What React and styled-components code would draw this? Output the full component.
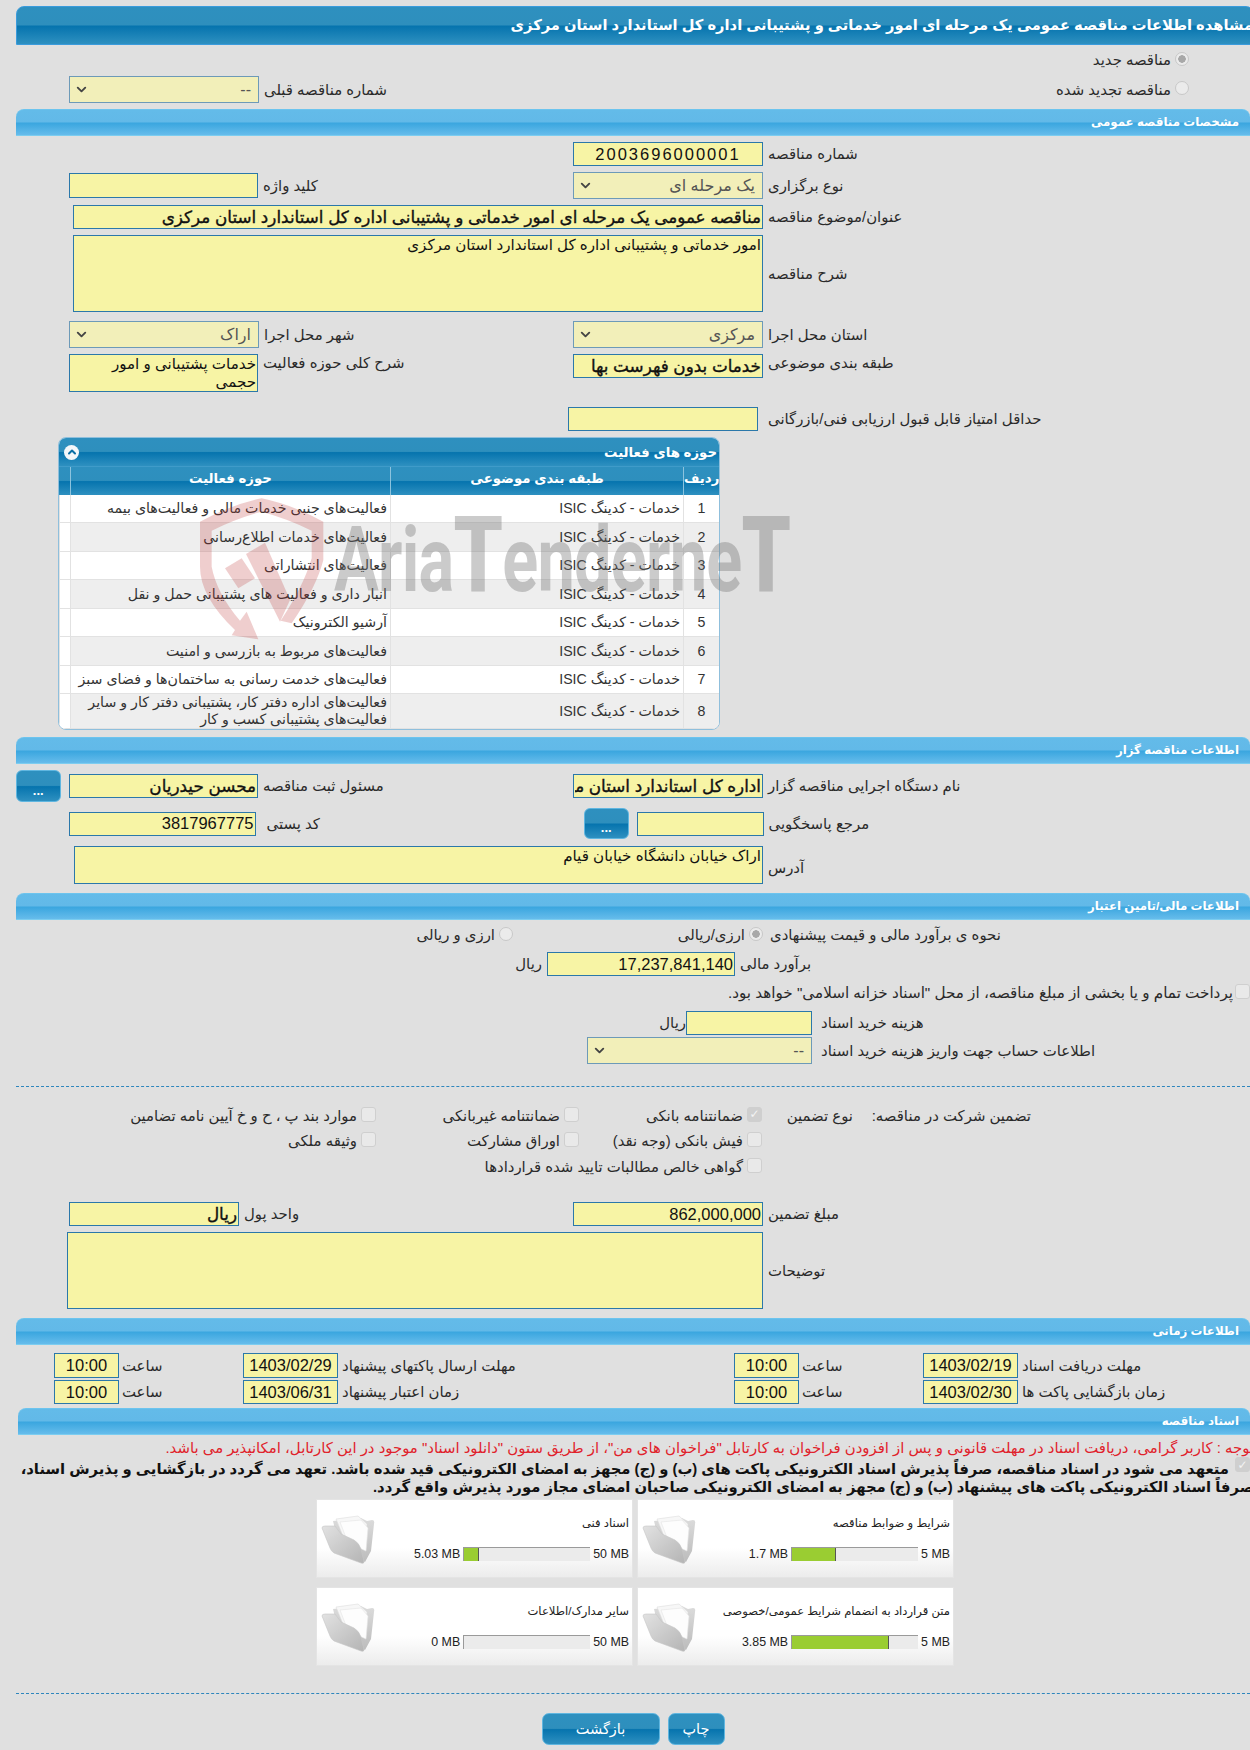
import React from "react"
import styled, { createGlobalStyle, css } from "styled-components"
import { ChevronDown, ChevronUp } from "lucide-react"

const GlobalStyle = createGlobalStyle`
  html, body {
    margin: 0;
    padding: 0;
    background: #e0e0e0;
    overflow-x: hidden;
  }
  body, input, textarea, button {
    font-family: "Liberation Sans", "DejaVu Sans", sans-serif;
  }
`

const darkGloss = css`
  background: linear-gradient(#2e90bf 0%, #2e8fbd 48%, #0674ae 52%, #2e90c0 100%);
`

const lightGloss = css`
  background: linear-gradient(#63bbe9 0%, #62b9e8 48%, #3aa6df 52%, #66bceb 100%);
`

const Page = styled.div`
  position: relative;
  width: 1250px;
  height: 1750px;
  box-sizing: border-box;
  padding: 6px 0 0 16px;
  overflow: hidden;
  color: #2a2a2a;
`

const TitleBar = styled.h1`
  ${darkGloss};
  height: 39px;
  box-sizing: border-box;
  margin: 0 -4px 0 0;
  padding: 0;
  border: 1px solid #3a9bdc;
  border-radius: 8px 8px 0 0;
  color: #fff;
  font-size: 14.7px;
  font-weight: 700;
  line-height: 36px;
  white-space: nowrap;
  overflow: hidden;
  text-align: right;
`

const SectionBar = styled.h2`
  ${lightGloss};
  height: 27px;
  box-sizing: border-box;
  margin: ${(p) => p.$mt || 0}px 0 0 ${(p) => p.$ml || 0}px;
  padding-right: 11px;
  border-bottom: 1px solid #7ccdf0;
  border-top: 1px solid #6cc4ee;
  border-radius: 8px 8px 0 0;
  color: #fff;
  font-size: 11.8px;
  font-weight: 700;
  line-height: 25px;
  text-align: right;
`

const Row = styled.div`
  display: grid;
  grid-template-columns: ${(p) => p.$split || 557}px 1fr;
  margin-top: ${(p) => p.$mt || 0}px;
  align-items: ${(p) => p.$align || "center"};
  min-height: ${(p) => p.$h || 0}px;
`

const Cell = styled.div`
  display: flex;
  align-items: ${(p) => p.$align || "center"};
  justify-content: ${(p) => p.$justify || "flex-start"};
  gap: ${(p) => p.$gap ?? 5}px;
  padding-left: ${(p) => p.$pl || 0}px;
  padding-right: ${(p) => p.$pr || 0}px;
  margin-left: ${(p) => p.$ml || 0}px;
`

const Wide = styled(Cell)`
  margin-top: ${(p) => p.$mt || 0}px;
`

const Label = styled.span.attrs({ dir: "rtl" })`
  font-size: 14.9px;
  line-height: 18px;
  white-space: nowrap;
  margin-top: ${(p) => p.$mt || 0}px;
`

const fieldBox = css`
  box-sizing: border-box;
  width: ${(p) => p.$w}px;
  height: ${(p) => p.$h || 24}px;
  flex: none;
  margin: 0;
  padding: 0 1px;
  border: 1px solid #2b78aa;
  border-radius: 0;
  background: #f7f4a5;
  color: #111;
  text-align: ${(p) => (p.$center ? "center" : "right")};
  outline: none;
`

const Input = styled.input.attrs((p) => ({
  dir: "rtl",
  readOnly: true,
  type: "text",
  value: p.value || "",
}))`
  ${fieldBox};
  font-size: ${(p) => (p.$num ? 16.5 : p.$strong ? 16.8 : 14.5)}px;
  letter-spacing: ${(p) => p.$spacing || 0}px;
  -webkit-text-stroke: ${(p) => (p.$strong ? "0.35px #111" : "0")};
`

const TextArea = styled.textarea.attrs((p) => ({
  dir: "rtl",
  readOnly: true,
  value: p.value || "",
}))`
  ${fieldBox};
  font-size: 15.1px;
  line-height: 18px;
  resize: none;
  overflow: hidden;
`

const SelectBox = styled.div`
  box-sizing: border-box;
  width: ${(p) => p.$w}px;
  height: 27px;
  flex: none;
  display: flex;
  align-items: center;
  justify-content: space-between;
  padding: 0 7px 0 4px;
  border: 1px solid #6d9ab8;
  background: #f2efb9;
  color: #555;
  font-size: 16px;

  svg {
    color: #444;
  }
`

const Select = ({ w, children }) => (
  <SelectBox $w={w}>
    <ChevronDown size={15} strokeWidth={3} />
    <span dir="rtl">{children}</span>
  </SelectBox>
)

const DotsButton = styled.button`
  ${darkGloss};
  width: 44.5px;
  height: ${(p) => p.$h || 32}px;
  flex: none;
  padding: 8px 0 0;
  margin-right: ${(p) => p.$mr || 0}px;
  border: 1px solid #5fb6e0;
  border-radius: 6px;
  color: #fff;
  font-size: 13px;
  font-weight: 700;
`

const Option = styled.label`
  display: flex;
  direction: rtl;
  align-items: center;
  gap: ${(p) => p.$gap ?? 4}px;
  width: ${(p) => (p.$w ? `${p.$w}px` : "auto")};
  padding-right: ${(p) => p.$pr || 0}px;
  font-size: ${(p) => p.$size || 14.9}px;
  line-height: 18px;
  white-space: nowrap;
`

const Radio = styled.input.attrs({ type: "radio", disabled: true })`
  appearance: none;
  box-sizing: border-box;
  flex: none;
  width: 14px;
  height: 14px;
  margin: -3px 0 0;
  border: 1px solid #c8c8c8;
  border-radius: 50%;
  background: #ebebeb;

  &:checked {
    background: radial-gradient(circle, #a8a8a8 0 3.5px, #ebebeb 4px);
  }
`

const Check = styled.input.attrs({ type: "checkbox", disabled: true })`
  appearance: none;
  box-sizing: border-box;
  flex: none;
  width: 15px;
  height: 15px;
  margin: -3px 0 0;
  border: 1px solid #cfcfcf;
  border-radius: 3px;
  background: #e9e9e9;
  display: grid;
  place-content: center;

  &:checked {
    background: #cfcfcf;
  }

  &:checked::after {
    content: "✓";
    color: #f4f4f4;
    font-size: 12px;
    font-weight: 700;
    line-height: 12px;
  }
`

const Panel = styled.section`
  width: 662px;
  height: 293px;
  box-sizing: border-box;
  margin: 6px 0 0 42px;
  border: 1px solid #8fbfdc;
  border-radius: 8px;
  background: #fff;
  overflow: hidden;
`

const PanelTitle = styled.div`
  ${darkGloss};
  height: 28px;
  display: flex;
  align-items: center;
  justify-content: space-between;
  padding: 0 2px 0 5px;
  color: #fff;
  font-size: 13.3px;
  font-weight: 700;
`

const Collapse = styled.span`
  width: 15px;
  height: 15px;
  display: grid;
  place-content: center;
  border-radius: 50%;
  background: #f3f7fa;
  color: #0b6fa6;
`

const tableColumns = "11px 320px 293px 36px"

const HeadRow = styled.div`
  ${darkGloss};
  height: 29px;
  display: grid;
  grid-template-columns: ${tableColumns};
  border-top: 1px solid #3f9bc9;
  box-sizing: border-box;
  color: #fff;
  font-size: 13.3px;
  font-weight: 700;
  line-height: 24px;
  text-align: center;
`

const HeadCell = styled.div`
  border-left: 1px solid #8cc3de;
  white-space: nowrap;
`

const BodyRow = styled.div`
  display: grid;
  grid-template-columns: ${tableColumns};
  height: ${(p) => p.$h}px;
`

const BodyCell = styled.div`
  box-sizing: border-box;
  display: flex;
  align-items: center;
  justify-content: ${(p) => (p.$center ? "center" : "flex-start")};
  direction: rtl;
  padding: 0 3px;
  background: ${(p) => (p.$alt ? "#eeeeee" : "#fff")};
  border-left: 1px solid #e2e2e2;
  border-bottom: 1px solid #e2e2e2;
  font-size: 14.2px;
  line-height: 17px;
  color: #333;
`

const Watermark = styled.div`
  position: absolute;
  left: 190px;
  top: 490px;
  width: 620px;
  height: 160px;
  pointer-events: none;
  display: flex;
  align-items: flex-end;
`

const WatermarkShield = styled.svg`
  flex: none;
`

const WatermarkText = styled.div`
  margin: 0 0 48px 4px;
  color: rgba(110, 110, 110, 0.36);
  font-family: Roboto, "Liberation Sans", sans-serif;
  font-size: 90px;
  font-weight: 700;
  line-height: 82px;
  letter-spacing: -1px;
  white-space: nowrap;
  transform: scaleX(0.74);
  transform-origin: left bottom;

  b {
    font-size: 106px;
    line-height: 82px;
  }
`

const Dashed = styled.hr`
  margin: ${(p) => p.$mt}px 0 0;
  border: 0;
  border-top: 1px dashed #2e86bd;
`

const GuaranteeGrid = styled.div`
  display: grid;
  direction: rtl;
  grid-template-columns: 178px 91px 183px 203px 1fr;
  grid-auto-rows: 25.5px;
  align-items: center;
  margin: 16px 219px 0 0;
`

const Plain = styled.span`
  font-size: 14.9px;
  white-space: nowrap;
`

const TimeRow = styled.div`
  display: grid;
  grid-template-columns: 189px 491px 189px 1fr;
  padding-left: 38px;
  margin-top: ${(p) => p.$mt}px;
`

const Notice = styled.p`
  margin: 4px -4px 0 0;
  direction: rtl;
  color: #e0222b;
  font-size: 14.9px;
  line-height: 18px;
  white-space: nowrap;
`

const Pledge = styled.div`
  direction: rtl;
  display: flex;
  align-items: flex-start;
  gap: 6px;
  margin: ${(p) => p.$mt || 0}px 0 0;
`

const PledgeLine = styled.p`
  margin: 0 ${(p) => p.$pull || 0}px 0 0;
  color: #111;
  font-size: 14.8px;
  font-weight: 700;
  line-height: 18px;
  white-space: nowrap;
`

const CardGrid = styled.div`
  display: grid;
  direction: rtl;
  grid-template-columns: 317px 317px;
  grid-auto-rows: 79px;
  gap: 9px 4px;
  width: 638px;
  margin: 3px 0 0 300px;
`

const Card = styled.div`
  box-sizing: border-box;
  display: grid;
  grid-template-columns: 1fr 60px;
  border: 1px solid #e4e4e4;
  background: linear-gradient(#fff 62%, #ececec 100%);
`

const CardBody = styled.div`
  padding: 15px 3px 0 0;
  color: #222;
`

const CardTitle = styled.div`
  font-size: 11.6px;
  line-height: 16px;
  white-space: nowrap;
`

const Meter = styled.div`
  display: flex;
  align-items: center;
  gap: 3px;
  margin-top: 16px;
`

const MeterText = styled.span.attrs({ dir: "ltr" })`
  font-size: 12.4px;
  line-height: 14px;
  white-space: nowrap;
`

const MeterTrack = styled.div`
  direction: ltr;
  box-sizing: border-box;
  width: 127px;
  height: 14px;
  border-top: 1px solid #9a9a9a;
  border-left: 1px solid #9a9a9a;
  background: #ebebeb;
`

const MeterFill = styled.div`
  height: 100%;
  box-sizing: border-box;
  border-right: 1px solid #555;
  background: #9acd32;
`

const FolderBox = styled.div`
  padding: 15px 0 0 2px;
`

const Actions = styled.div`
  display: flex;
  justify-content: center;
  gap: 8px;
  margin-top: 19px;
`

const ActionButton = styled.button`
  ${darkGloss};
  width: ${(p) => p.$w}px;
  height: 32px;
  padding: 0;
  border: 1px solid #5fb6e0;
  border-radius: 7px;
  color: #fff;
  font-size: 14.5px;
`

const FolderIcon = () => (
  <svg width="56" height="50" viewBox="0 0 56 50">
    <defs>
      <linearGradient id="folderFront" x1="0" y1="0" x2="1" y2="1">
        <stop offset="0" stopColor="#e2e2e2" />
        <stop offset="1" stopColor="#b4b4b4" />
      </linearGradient>
      <linearGradient id="folderBack" x1="0" y1="0" x2="0" y2="1">
        <stop offset="0" stopColor="#dcdcdc" />
        <stop offset="1" stopColor="#bcbcbc" />
      </linearGradient>
    </defs>
    <path d="M12 6 L40 3 L46 6 L51 5 Q54 5 53 9 L50 36 L44 47 L18 30 Z" fill="url(#folderBack)" />
    <path d="M15 4 L37 1 L46 9 L44 34 L24 26 Z" fill="#f7f7f7" stroke="#dedede" strokeWidth="0.6" />
    <path d="M19 7 L40 5 L47 13 L45 36 L27 28 Z" fill="#fdfdfd" stroke="#e4e4e4" strokeWidth="0.6" />
    <path d="M1 13 Q1 11 4 11 L14 11 L20 19 L33 25 Q38 28 40 34 L43 47 Q43 49 40 48 L13 38 Q10 36 9 33 Z" fill="url(#folderFront)" stroke="#c6c6c6" strokeWidth="0.6" />
  </svg>
)

const WatermarkLogo = () => (
  <WatermarkShield width="140" height="160" viewBox="0 0 420 480">
    <path
      d="M30 95 Q120 45 215 25 Q310 45 400 95 L400 210 Q380 290 305 400 L272 392 Q340 290 365 205 L365 122 Q290 85 215 65 Q140 85 65 122 L65 230 Q80 310 150 392 L170 365 L205 448 L125 436 L135 420 Q30 320 30 230 Z"
      fill="rgba(190, 50, 50, 0.24)"
    />
    <path d="M168 192 L225 158 L300 330 L270 395 Z" fill="rgba(190, 50, 50, 0.24)" />
    <path d="M105 235 L155 205 L195 265 L145 295 Z" fill="rgba(190, 50, 50, 0.24)" />
  </WatermarkShield>
)

const activities = [
  ["فعالیت‌های جنبی خدمات مالی و فعالیت‌های بیمه", 28],
  ["فعالیت‌های خدمات اطلاع‌رسانی", 29],
  ["فعالیت‌های انتشاراتی", 28],
  ["انبار داری و فعالیت های پشتیبانی حمل و نقل", 29],
  ["آرشیو الکترونیک", 28],
  ["فعالیت‌های مربوط به بازرسی و امنیت", 29],
  ["فعالیت‌های خدمت رسانی به ساختمان‌ها و فضای سبز", 28],
  ["فعالیت‌های  اداره دفتر کار، پشتیبانی دفتر کار و سایر فعالیت‌های پشتیبانی کسب و کار", 35],
]

const documents = [
  { title: "شرایط و ضوابط مناقصه", used: "1.7 MB", limit: "5 MB", percent: 35 },
  { title: "اسناد فنی", used: "5.03 MB", limit: "50 MB", percent: 12 },
  { title: "متن قرارداد به انضمام شرایط عمومی/خصوصی", used: "3.85 MB", limit: "5 MB", percent: 77 },
  { title: "سایر مدارک/اطلاعات", used: "0 MB", limit: "50 MB", percent: 0 },
]

const App = () => (
  <Page>
    <GlobalStyle />
    <TitleBar dir="rtl">مشاهده اطلاعات مناقصه عمومی یک مرحله ای امور خدماتی و پشتیبانی اداره کل استاندارد استان مرکزی</TitleBar>

    <Row $mt={6} $h={16}>
      <div />
      <Cell $justify="flex-end" $pr={61}>
        <Option><Radio defaultChecked name="kind" />مناقصه جدید</Option>
      </Cell>
    </Row>
    <Row $mt={7} $h={27}>
      <Cell $pl={53}>
        <Select w={190}>--</Select>
        <Label>شماره مناقصه قبلی</Label>
      </Cell>
      <Cell $justify="flex-end" $pr={61}>
        <Option><Radio name="kind" />مناقصه تجدید شده</Option>
      </Cell>
    </Row>

    <SectionBar $mt={6}>مشخصات مناقصه عمومی</SectionBar>
    <Row $mt={6}>
      <div />
      <Cell>
        <Input $w={190} $num $center $spacing={2} value="2003696000001" />
        <Label>شماره مناقصه</Label>
      </Cell>
    </Row>
    <Row $mt={6} $h={27}>
      <Cell $pl={53}>
        <Input $w={189} $h={25} />
        <Label>کلید واژه</Label>
      </Cell>
      <Cell>
        <Select w={190}>یک مرحله ای</Select>
        <Label>نوع برگزاری</Label>
      </Cell>
    </Row>
    <Wide $mt={6} $pl={57}>
      <Input $w={690} $strong value="مناقصه عمومی یک مرحله ای امور خدماتی و پشتیبانی اداره کل استاندارد استان مرکزی" />
      <Label>عنوان/موضوع مناقصه</Label>
    </Wide>
    <Wide $mt={6} $pl={57}>
      <TextArea $w={690} $h={77} value="امور خدماتی و پشتیبانی اداره کل استاندارد استان مرکزی" />
      <Label>شرح مناقصه</Label>
    </Wide>
    <Row $mt={9} $h={27}>
      <Cell $pl={53}>
        <Select w={190}>اراک</Select>
        <Label>شهر محل اجرا</Label>
      </Cell>
      <Cell>
        <Select w={190}>مرکزی</Select>
        <Label>استان محل اجرا</Label>
      </Cell>
    </Row>
    <Row $mt={6} $align="start">
      <Cell $pl={53} $align="flex-start">
        <TextArea $w={189} $h={38} value={"خدمات پشتیبانی و امور\nحجمی"} />
        <Label>شرح کلی حوزه فعالیت</Label>
      </Cell>
      <Cell $align="flex-start">
        <Input $w={190} $strong value="خدمات بدون فهرست بها" />
        <Label>طبقه بندی موضوعی</Label>
      </Cell>
    </Row>
    <Row $mt={15}>
      <div />
      <Cell $gap={10} $ml={-5}>
        <Input $w={190} />
        <Label>حداقل امتیاز قابل قبول ارزیابی فنی/بازرگانی</Label>
      </Cell>
    </Row>

    <Panel>
      <PanelTitle>
        <Collapse><ChevronUp size={12} strokeWidth={4} /></Collapse>
        <span dir="rtl">حوزه های فعالیت</span>
      </PanelTitle>
      <HeadRow>
        <div />
        <HeadCell>حوزه فعالیت</HeadCell>
        <HeadCell>طبقه بندی موضوعی</HeadCell>
        <HeadCell>ردیف</HeadCell>
      </HeadRow>
      {activities.map(([name, height], i) => (
        <BodyRow key={i} $h={height}>
          <BodyCell />
          <BodyCell $alt={i % 2 === 1}>{name}</BodyCell>
          <BodyCell $alt={i % 2 === 1}>خدمات - کدینگ ISIC</BodyCell>
          <BodyCell $alt={i % 2 === 1} $center>{i + 1}</BodyCell>
        </BodyRow>
      ))}
    </Panel>

    <SectionBar $mt={7}>اطلاعات مناقصه گزار</SectionBar>
    <Row $mt={6} $h={32}>
      <Cell>
        <DotsButton $mr={3.5}>...</DotsButton>
        <Input $w={189} $strong value="محسن حیدریان" />
        <Label>مسئول ثبت مناقصه</Label>
      </Cell>
      <Cell>
        <Input $w={190} $strong value="اداره کل استاندارد استان مرکزی" />
        <Label>نام دستگاه اجرایی مناقصه گزار</Label>
      </Cell>
    </Row>
    <Row $mt={6} $h={31}>
      <Cell $pl={53} $gap={11}>
        <Input $w={186.5} $num value="3817967775" />
        <Label>کد پستی</Label>
      </Cell>
      <Cell $pl={11} $gap={5}>
        <DotsButton $h={31} $mr={3}>...</DotsButton>
        <Input $w={127} />
        <Label>مرجع پاسخگویی</Label>
      </Cell>
    </Row>
    <Wide $mt={7} $pl={58}>
      <TextArea $w={689} $h={38} value="اراک خیابان دانشگاه خیابان قیام" />
      <Label $mt={6}>آدرس</Label>
    </Wide>

    <SectionBar $mt={9}>اطلاعات مالی/تامین اعتبار</SectionBar>
    <Row $mt={6} $h={18}>
      <Cell $justify="flex-end" $pr={60}>
        <Option><Radio name="rate" />ارزی و ریالی</Option>
      </Cell>
      <Cell>
        <Option $w={190} $pr={2}><Radio defaultChecked name="rate" />ارزی/ریالی</Option>
        <Label>نحوه ی برآورد مالی و قیمت پیشنهادی</Label>
      </Cell>
    </Row>
    <Row $split={531} $mt={8}>
      <Cell $justify="flex-end" $pr={5}>
        <Label>ریال</Label>
      </Cell>
      <Cell>
        <Input $w={188} $num value="17,237,841,140" />
        <Label>برآورد مالی</Label>
      </Cell>
    </Row>
    <Wide $mt={8} $justify="flex-end">
      <Option $gap={2} $size={15.2}>
        <Check />پرداخت تمام و یا بخشی از مبلغ مناقصه، از محل "اسناد خزانه اسلامی" خواهد بود.
      </Option>
    </Wide>
    <Row $split={670} $mt={9}>
      <Cell $justify="flex-end" $gap={0}>
        <Label>ریال</Label>
      </Cell>
      <Cell $gap={9}>
        <Input $w={126} />
        <Label>هزینه خرید اسناد</Label>
      </Cell>
    </Row>
    <Row $split={571} $mt={2}>
      <div />
      <Cell $gap={9}>
        <Select w={225}>--</Select>
        <Label>اطلاعات حساب جهت واریز هزینه خرید اسناد</Label>
      </Cell>
    </Row>
    <Dashed $mt={22} />

    <GuaranteeGrid>
      <Plain>تضمین شرکت در مناقصه:</Plain>
      <Plain>نوع تضمین</Plain>
      <Option><Check defaultChecked />ضمانتنامه بانکی</Option>
      <Option><Check />ضمانتنامه غیربانکی</Option>
      <Option><Check />موارد بند پ ، ح و خ آیین نامه تضامین</Option>
      <div />
      <div />
      <Option><Check />فیش بانکی (وجه نقد)</Option>
      <Option><Check />اوراق مشارکت</Option>
      <Option><Check />وثیقه ملکی</Option>
      <div />
      <div />
      <Option><Check />گواهی خالص مطالبات تایید شده قراردادها</Option>
    </GuaranteeGrid>

    <Row $mt={22.5}>
      <Cell $pl={53}>
        <Input $w={170} $strong value="ریال" />
        <Label>واحد پول</Label>
      </Cell>
      <Cell>
        <Input $w={190} $num value="862,000,000" />
        <Label>مبلغ تضمین</Label>
      </Cell>
    </Row>
    <Wide $mt={6} $pl={51}>
      <TextArea $w={696} $h={77} />
      <Label>توضیحات</Label>
    </Wide>

    <SectionBar $mt={9}>اطلاعات زمانی</SectionBar>
    <TimeRow $mt={8}>
      <Cell $gap={3}>
        <Input $w={65} $h={25} $num $center value="10:00" />
        <Label>ساعت</Label>
      </Cell>
      <Cell $gap={4}>
        <Input $w={95} $h={25} $num $center value="1403/02/29" />
        <Label>مهلت ارسال پاکتهای پیشنهاد</Label>
      </Cell>
      <Cell $gap={3}>
        <Input $w={65} $h={25} $num $center value="10:00" />
        <Label>ساعت</Label>
      </Cell>
      <Cell $gap={4}>
        <Input $w={95} $h={25} $num $center value="1403/02/19" />
        <Label>مهلت دریافت اسناد</Label>
      </Cell>
    </TimeRow>
    <TimeRow $mt={2}>
      <Cell $gap={3}>
        <Input $w={65} $num $center value="10:00" />
        <Label>ساعت</Label>
      </Cell>
      <Cell $gap={4}>
        <Input $w={95} $num $center value="1403/06/31" />
        <Label>زمان اعتبار پیشنهاد</Label>
      </Cell>
      <Cell $gap={3}>
        <Input $w={65} $num $center value="10:00" />
        <Label>ساعت</Label>
      </Cell>
      <Cell $gap={4}>
        <Input $w={95} $num $center value="1403/02/30" />
        <Label>زمان بازگشایی پاکت ها</Label>
      </Cell>
    </TimeRow>

    <SectionBar $mt={4} $ml={2}>اسناد مناقصه</SectionBar>
    <Notice>توجه : کاربر گرامی، دریافت اسناد در مهلت قانونی و پس از افزودن فراخوان به کارتابل "فراخوان های من"، از طریق ستون "دانلود اسناد" موجود در این کارتابل، امکانپذیر می باشد.</Notice>
    <Pledge $mt={3}>
      <Check defaultChecked />
      <PledgeLine>متعهد می شود در اسناد مناقصه، صرفاً پذیرش اسناد الکترونیکی پاکت های (ب) و (ج) مجهز به امضای الکترونیکی قید شده باشد. تعهد می گردد در بازگشایی و پذیرش اسناد،</PledgeLine>
    </Pledge>
    <Pledge>
      <PledgeLine $pull={-4}>صرفاً اسناد الکترونیکی پاکت های پیشنهاد (ب) و (ج) مجهز به امضای الکترونیکی صاحبان امضای مجاز مورد پذیرش واقع گردد.</PledgeLine>
    </Pledge>

    <CardGrid>
      {documents.map((doc) => (
        <Card key={doc.title}>
          <CardBody>
            <CardTitle>{doc.title}</CardTitle>
            <Meter>
              <MeterText>{doc.limit}</MeterText>
              <MeterTrack>
                {doc.percent > 0 && <MeterFill style={{ width: `${doc.percent}%` }} />}
              </MeterTrack>
              <MeterText>{doc.used}</MeterText>
            </Meter>
          </CardBody>
          <FolderBox><FolderIcon /></FolderBox>
        </Card>
      ))}
    </CardGrid>

    <Dashed $mt={27} />
    <Actions>
      <ActionButton $w={118}>بازگشت</ActionButton>
      <ActionButton $w={57}>چاپ</ActionButton>
    </Actions>

    <Watermark>
      <WatermarkLogo />
      <WatermarkText>Aria<b>T</b>enderne<b>T</b></WatermarkText>
    </Watermark>
  </Page>
)

export default App
